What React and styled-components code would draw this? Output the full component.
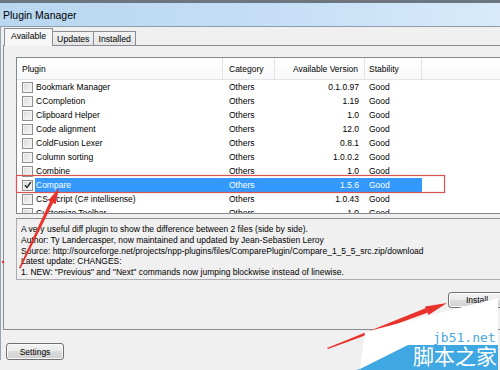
import styled, { createGlobalStyle } from "styled-components";

const GlobalStyle = createGlobalStyle`
  html, body {
    margin: 0;
    padding: 0;
    background: #f0f0f0;
    overflow: hidden;
  }
  body {
    font-family: "Liberation Sans", Arial, sans-serif;
    font-size: 8.5px;
    color: #000;
  }
`;

const plugins = [
  { name: "Bookmark Manager", version: "0.1.0.97" },
  { name: "CCompletion", version: "1.19" },
  { name: "Clipboard Helper", version: "1.0" },
  { name: "Code alignment", version: "12.0" },
  { name: "ColdFusion Lexer", version: "0.8.1" },
  { name: "Column sorting", version: "1.0.0.2" },
  { name: "Combine", version: "1.0" },
  { name: "Compare", version: "1.5.6", selected: true },
  { name: "CS-Script (C# intellisense)", version: "1.0.43" },
  { name: "Customize Toolbar", version: "1.0" },
];

const description = [
  "A very useful diff plugin to show the difference between 2 files (side by side).",
  "Author: Ty Landercasper, now maintained and updated by Jean-Sebastien Leroy",
  "Source: http://sourceforge.net/projects/npp-plugins/files/ComparePlugin/Compare_1_5_5_src.zip/download",
  "Latest update: CHANGES:",
  "1. NEW: \"Previous\" and \"Next\" commands now jumping blockwise instead of linewise.",
];

const Screen = styled.div`
  position: relative;
  width: 500px;
  height: 370px;
  overflow: hidden;
  background: #f0f0f0;
`;

const TitleBar = styled.div`
  width: 540px;
  height: 23px;
  box-sizing: content-box;
  border-top: 3px solid #6d767e;
  border-bottom: 1px solid #8d9cab;
  background: linear-gradient(90deg, #b9d7f1 0%, #c3ddf5 45%, #d2e7f9 80%, #dcedfb 100%);
  display: flex;
  align-items: center;
  padding-left: 3px;
  font-size: 10.5px;
`;

const Body = styled.div`
  width: 540px;
  border-left: 1px solid #97a4b1;
  display: flex;
  flex-direction: column;
`;

const TabStrip = styled.div`
  display: flex;
  align-items: flex-end;
  height: 18px;
  padding-left: 3px;
`;

const Tab = styled.div`
  position: relative;
  z-index: ${({ $active }) => ($active ? 1 : 0)};
  height: ${({ $active }) => ($active ? "18px" : "14px")};
  margin-bottom: ${({ $active }) => ($active ? "-1px" : "0")};
  margin-left: ${({ $active }) => ($active ? "0" : "-1px")};
  padding: ${({ $active }) => ($active ? "0 6px 3px" : "0 4px")};
  box-sizing: border-box;
  border: 1px solid #898c95;
  border-bottom: none;
  background: ${({ $active }) =>
    $active ? "#f7f7f7" : "linear-gradient(#f3f3f3, #e4e4e4)"};
  display: flex;
  align-items: center;
  font-size: 8.7px;
  &:first-child {
    margin-left: 0;
  }
`;

const Panel = styled.div`
  margin-left: 2px;
  border: 1px solid #898c95;
  background: #f0f0f0;
  padding: 11px 0 21px 12px;
  display: flex;
  flex-direction: column;
`;

const ListBox = styled.div`
  height: 157px;
  margin-right: 12px;
  box-sizing: border-box;
  border: 1px solid #828790;
  background: #fff;
  overflow: hidden;
`;

const HeaderRow = styled.div`
  display: grid;
  grid-template-columns: 206px 52px 90px 57px 1fr;
  height: 22px;
  box-sizing: border-box;
  border-bottom: 1px solid #e5e5e5;
  background: linear-gradient(#ffffff, #f7f8f9);
`;

const HeadCell = styled.div`
  display: flex;
  align-items: center;
  justify-content: ${({ $right }) => ($right ? "flex-end" : "flex-start")};
  padding: ${({ $pad }) => $pad};
  border-right: 1px solid #e3e3e3;
  &:last-child {
    border-right: none;
  }
`;

const Row = styled.div`
  display: grid;
  grid-template-columns: 18px 188px 52px 90px 57px;
  height: 14px;
`;

const CheckCell = styled.div`
  display: flex;
  align-items: center;
  padding-left: 5px;
`;

const Cell = styled.div`
  display: flex;
  align-items: center;
  white-space: nowrap;
  overflow: hidden;
  justify-content: ${({ $right }) => ($right ? "flex-end" : "flex-start")};
  padding: ${({ $pad }) => $pad};
  background: ${({ $selected }) => ($selected ? "#3399ff" : "transparent")};
  color: ${({ $selected }) => ($selected ? "#fff" : "#000")};
`;

const CheckBox = styled.div`
  width: 11px;
  height: 11px;
  box-sizing: border-box;
  border: 1px solid #8f8f8f;
  background: linear-gradient(135deg, #d9d9d9, #f9f9f9);
  box-shadow: inset 0 0 0 1px #f4f4f4;
  display: flex;
  align-items: center;
  justify-content: center;
`;

const Description = styled.div`
  margin-top: 4px;
  margin-right: 12px;
  height: 62px;
  box-sizing: border-box;
  border: 1px solid #abadb3;
  border-top-color: #8e8f8f;
  background: #f0f0f0;
  padding: 5px 4px;
  line-height: 10.8px;
  white-space: nowrap;
  overflow: hidden;
`;

const ButtonRow = styled.div`
  display: flex;
  justify-content: flex-end;
  margin-top: 12px;
  padding-right: 34px;
`;

const Button = styled.div`
  width: 58px;
  height: ${({ $tall }) => ($tall ? "17px" : "16px")};
  box-sizing: border-box;
  border: 1px solid #707070;
  border-radius: 3px;
  background: linear-gradient(#f2f2f2 0%, #ebebeb 50%, #dddddd 50%, #cfcfcf 100%);
  box-shadow: inset 0 0 0 1px #fbfbfb;
  display: flex;
  align-items: center;
  justify-content: center;
  font-size: 8.5px;
`;

const Footer = styled.div`
  padding: 13px 0 0 5px;
`;

const Overlay = styled.svg`
  position: absolute;
  left: 0;
  top: 0;
  pointer-events: none;
`;

function Check() {
  return (
    <svg width="8" height="8" viewBox="0 0 8 8">
      <path d="M1 4.2 L3 6.5 L7 1" fill="none" stroke="#2a2a2a" strokeWidth="1.4" />
    </svg>
  );
}

function PluginRow({ plugin }) {
  const sel = plugin.selected;
  return (
    <Row>
      <CheckCell>
        <CheckBox>{sel && <Check />}</CheckBox>
      </CheckCell>
      <Cell $selected={sel} $pad="0 0 0 1px">{plugin.name}</Cell>
      <Cell $selected={sel} $pad="0 0 0 6px">Others</Cell>
      <Cell $selected={sel} $right $pad="0 6px 0 0">{plugin.version}</Cell>
      <Cell $selected={sel} $pad="0 0 0 4px">Good</Cell>
    </Row>
  );
}

export default function App() {
  return (
    <Screen>
      <GlobalStyle />
      <TitleBar>Plugin Manager</TitleBar>
      <Body>
        <TabStrip>
          <Tab $active>Available</Tab>
          <Tab>Updates</Tab>
          <Tab>Installed</Tab>
        </TabStrip>
        <Panel>
          <ListBox>
            <HeaderRow>
              <HeadCell $pad="0 0 0 5px">Plugin</HeadCell>
              <HeadCell $pad="0 0 0 6px">Category</HeadCell>
              <HeadCell $right $pad="0 6px 0 0">Available Version</HeadCell>
              <HeadCell $pad="0 0 0 4px">Stability</HeadCell>
              <HeadCell />
            </HeaderRow>
            {plugins.map((p) => (
              <PluginRow key={p.name} plugin={p} />
            ))}
          </ListBox>
          <Description>
            {description.map((line) => (
              <div key={line}>{line}</div>
            ))}
          </Description>
          <ButtonRow>
            <Button>Install</Button>
          </ButtonRow>
        </Panel>
        <Footer>
          <Button $tall>Settings</Button>
        </Footer>
      </Body>

      <Overlay width="500" height="370" viewBox="0 0 500 370">
        {/* annotation box round the selected row */}
        <rect x="16.5" y="175.5" width="428" height="17" fill="none" stroke="#d9534f" strokeWidth="1.2" />
        {/* arrow to the Compare row */}
        <polygon points="19,268 20.5,268.6 53.8,201.6 50.6,200 " fill="#e8322c" />
        <polygon points="59,188 55.6,204.3 48.3,200.6" fill="#e8322c" />
        <circle cx="3" cy="262" r="1.2" fill="#e8322c" />
        {/* arrow to the Install button */}
        <polygon points="327,348 328,349 428,312.5 426,308" fill="#e8322c" />
        <polygon points="447,303 428.5,315 425,306.5" fill="#e8322c" />
        {/* watermark */}
        <polygon points="365,332 498,298 498,345 408,345 360,369" fill="#ffffff" />
        <polygon points="360,369 408,345 498,345 498,370 356,370" fill="#3fa7e1" />
        <text x="433" y="342" fontFamily="DejaVu Sans Mono, monospace" fontSize="13" fill="#4aa8de">
          jb51.net
        </text>
        <text x="413" y="364" fontFamily="Noto Sans CJK SC, sans-serif" fontSize="21" fill="#ffffff">
          脚本之家
        </text>
      </Overlay>
    </Screen>
  );
}
